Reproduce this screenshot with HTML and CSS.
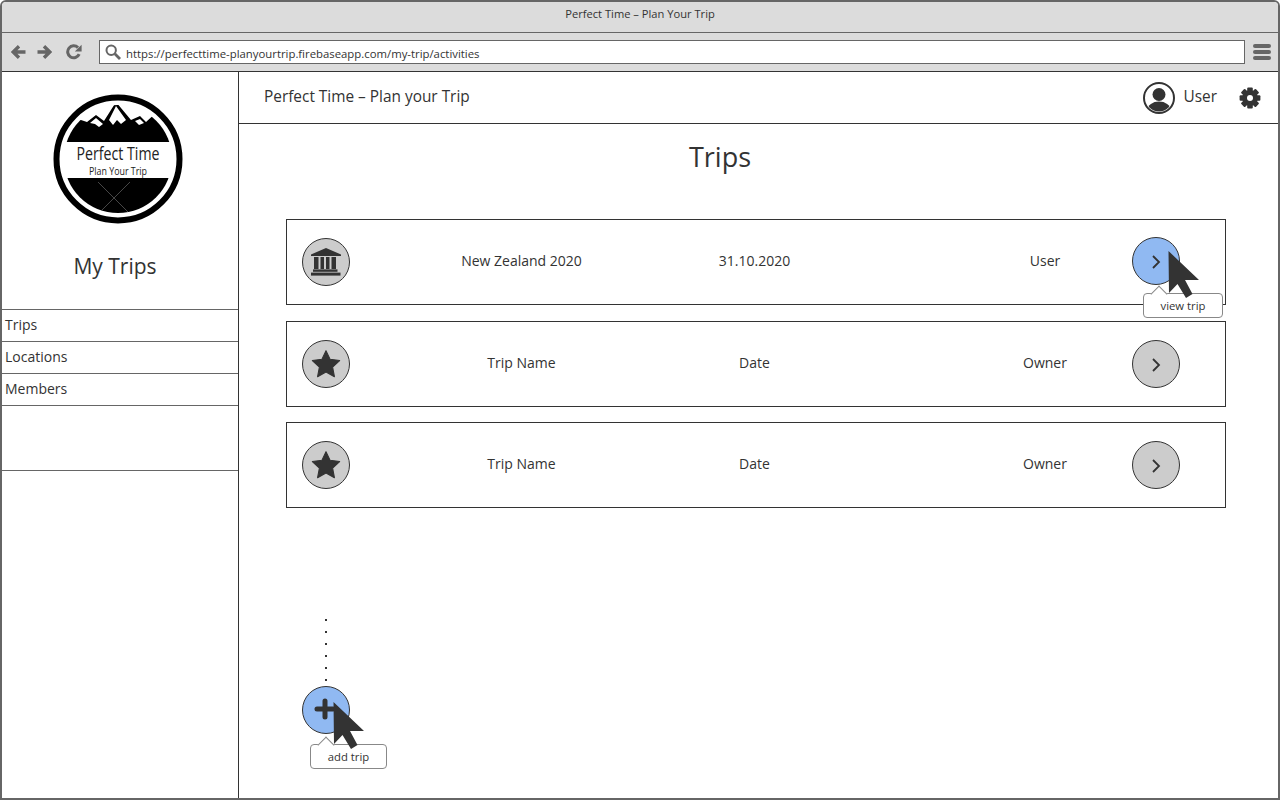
FILE: index.html
```html
<!DOCTYPE html>
<html lang="en">
<head>
  <meta charset="UTF-8">
  <meta name="viewport" content="width=device-width, initial-scale=1.0">
  <link rel="stylesheet" href="styles.css">
  <title>Perfect Time – Plan Your Trip</title>
</head>
<body>
  <div class="window">
    <div class="titleBar">Perfect Time – Plan Your Trip</div>

    <div class="navBar">
      <svg class="navIcon" width="16" height="16" viewBox="0 0 16 16">
        <path d="M14.5 8H2.5M8 2.2L2.2 8L8 13.8" fill="none" stroke="#666" stroke-width="3.4"/>
      </svg>
      <svg class="navIcon" width="16" height="16" viewBox="0 0 16 16">
        <path d="M1.5 8H13.5M8 2.2L13.8 8L8 13.8" fill="none" stroke="#666" stroke-width="3.4"/>
      </svg>
      <svg class="navIcon reload" width="16" height="16" viewBox="0 0 16 16">
        <path d="M13.2 10.2A6 6 0 1 1 12 3.6" fill="none" stroke="#666" stroke-width="3"/>
        <path d="M15.6 0.8V7.6H8.8Z" fill="#666"/>
      </svg>
      <div class="urlBox">
        <svg class="searchIcon" width="16" height="16" viewBox="0 0 16 16">
          <circle cx="6.2" cy="6.2" r="4.7" fill="none" stroke="#666" stroke-width="2"/>
          <path d="M9.8 9.8L15 15" stroke="#666" stroke-width="2.8"/>
        </svg>
        <span class="urlText">https://perfecttime-planyourtrip.firebaseapp.com/my-trip/activities</span>
      </div>
      <div class="burger"><i></i><i></i><i></i></div>
    </div>

    <div class="app">
      <aside class="sidebar">
        <svg class="logo" width="130" height="130" viewBox="0 0 130 130">
          <defs>
            <clipPath id="logoClip"><circle cx="65" cy="65" r="54"/></clipPath>
          </defs>
          <circle cx="65" cy="65" r="61.5" fill="#fff" stroke="#000" stroke-width="6"/>
          <g clip-path="url(#logoClip)">
            <path d="M0 48L9 48L19 23L34 28L43 21L51 27L63 8L78 26L87 22L93 28L105 17L130 48Z" fill="#000"/>
            <path d="M37 29L43 24L50 30L46 33L42 30ZM56 26L63 12L73 26L68 30L64 26L60 31ZM82 27L87 25L91 29L86 31Z" fill="#fff"/>
            <rect x="0" y="84" width="130" height="46" fill="#000"/>
            <path d="M45 88L77 120M77 88L45 120" stroke="#777" stroke-width="0.6"/>
          </g>
          <text class="logoTitle" x="65" y="66" text-anchor="middle" textLength="83" lengthAdjust="spacingAndGlyphs">Perfect Time</text>
          <text class="logoSub" x="65" y="81" text-anchor="middle" textLength="58" lengthAdjust="spacingAndGlyphs">Plan Your Trip</text>
        </svg>
        <h2 class="sideTitle">My Trips</h2>
        <ul class="sideNav">
          <li>Trips</li>
          <li>Locations</li>
          <li>Members</li>
          <li class="sideEmpty"></li>
        </ul>
      </aside>

      <div class="content">
        <header class="topBar">
          <span class="appName">Perfect Time – Plan your Trip</span>
          <svg class="avatar" width="32" height="32" viewBox="0 0 32 32">
            <defs>
              <clipPath id="avatarClip"><circle cx="16" cy="16" r="13.5"/></clipPath>
            </defs>
            <circle cx="16" cy="16" r="15" fill="#fff" stroke="#333" stroke-width="2"/>
            <circle cx="16" cy="12.5" r="6.5" fill="#333"/>
            <ellipse cx="16" cy="28" rx="11.5" ry="8.5" fill="#333" clip-path="url(#avatarClip)"/>
          </svg>
          <span class="userName">User</span>
          <svg class="gear" width="22" height="22" viewBox="0 0 22 22">
            <g fill="#333">
              <circle cx="11" cy="11" r="7.8"/>
              <rect x="8.2" y="0.6" width="5.6" height="20.8" rx="1"/>
              <rect x="8.2" y="0.6" width="5.6" height="20.8" rx="1" transform="rotate(45 11 11)"/>
              <rect x="8.2" y="0.6" width="5.6" height="20.8" rx="1" transform="rotate(90 11 11)"/>
              <rect x="8.2" y="0.6" width="5.6" height="20.8" rx="1" transform="rotate(135 11 11)"/>
            </g>
            <circle cx="11" cy="11" r="3" fill="#fff"/>
          </svg>
        </header>

        <main class="mainArea">
          <h1 class="pageTitle">Trips</h1>

          <div class="tripRow">
            <div class="circle">
              <svg width="32" height="30" viewBox="0 0 32 30">
                <path d="M16 1L31 7.6V9H1V7.6Z" fill="#333"/>
                <path d="M4 10H8.5V22H4ZM10.5 10H14V22H10.5ZM16 10H19.5V22H16ZM21.5 10H26V22H21.5Z" fill="#333"/>
                <rect x="3" y="22.4" width="24.5" height="2.4" fill="#333"/>
                <rect x="1" y="25.6" width="29.5" height="3" fill="#333"/>
              </svg>
            </div>
            <span class="tripName">New Zealand 2020</span>
            <span class="tripDate">31.10.2020</span>
            <span class="tripOwner">User</span>
            <div class="circle active">
              <svg class="chevron" width="10" height="14" viewBox="0 0 10 14"><path d="M2 1L8 7L2 13" fill="none" stroke="#333" stroke-width="1.8"/></svg>
            </div>
            <div class="tooltip viewTip">view trip</div>
            <svg class="pointer viewPointer" width="32" height="48" viewBox="0 0 32 48">
              <path d="M0.5 0L1 42L9.5 33L18 47L24.5 43L17 29L31 29Z" fill="#333"/>
            </svg>
          </div>

          <div class="tripRow tightRow">
            <div class="circle">
              <svg width="32" height="32" viewBox="0 0 30 30">
                <path d="M15 2.5L18.8 10.6L27.8 11.8L21.2 18L22.9 26.9L15 22.5L7.1 26.9L8.8 18L2.2 11.8L11.2 10.6Z" fill="#333" stroke="#333" stroke-linejoin="round"/>
              </svg>
            </div>
            <span class="tripName">Trip Name</span>
            <span class="tripDate">Date</span>
            <span class="tripOwner">Owner</span>
            <div class="circle">
              <svg class="chevron" width="10" height="14" viewBox="0 0 10 14"><path d="M2 1L8 7L2 13" fill="none" stroke="#333" stroke-width="1.8"/></svg>
            </div>
          </div>

          <div class="tripRow">
            <div class="circle">
              <svg width="32" height="32" viewBox="0 0 30 30">
                <path d="M15 2.5L18.8 10.6L27.8 11.8L21.2 18L22.9 26.9L15 22.5L7.1 26.9L8.8 18L2.2 11.8L11.2 10.6Z" fill="#333" stroke="#333" stroke-linejoin="round"/>
              </svg>
            </div>
            <span class="tripName">Trip Name</span>
            <span class="tripDate">Date</span>
            <span class="tripOwner">Owner</span>
            <div class="circle">
              <svg class="chevron" width="10" height="14" viewBox="0 0 10 14"><path d="M2 1L8 7L2 13" fill="none" stroke="#333" stroke-width="1.8"/></svg>
            </div>
          </div>

          <div class="addArea">
            <div class="dots"></div>
            <div class="circle active">
              <svg class="plus" width="22" height="22" viewBox="0 0 22 22"><path d="M11 3V19M3 11H19" stroke="#333" stroke-width="5" stroke-linecap="round"/></svg>
            </div>
            <div class="tooltip addTip">add trip</div>
            <svg class="pointer addPointer" width="32" height="48" viewBox="0 0 32 48">
              <path d="M0.5 0L1 42L9.5 33L18 47L24.5 43L17 29L31 29Z" fill="#333"/>
            </svg>
          </div>
        </main>
      </div>
    </div>
  </div>
</body>
</html>
```

FILE: styles.css
```css
* {
  box-sizing: border-box;
}

html, body {
  margin: 0;
  background-color: #fff;
}

body {
  font-family: "Open Sans", Arial, sans-serif;
  color: #333;
}

.window {
  display: flex;
  flex-direction: column;
  width: 1280px;
  height: 800px;
  border: 2px solid #666;
  border-radius: 6px 6px 0 0;
  overflow: hidden;
}

.titleBar {
  height: 31px;
  line-height: 24px;
  flex-shrink: 0;
  text-align: center;
  font-size: 11.15px;
  background-color: #dcdcdc;
  border-bottom: 1px solid #666;
}

.navBar {
  display: flex;
  align-items: center;
  height: 39px;
  flex-shrink: 0;
  padding-left: 9px;
  background-color: #dcdcdc;
  border-bottom: 1px solid #333;
}

.navIcon {
  margin-right: 9px;
}

.reload {
  margin-left: 5px;
  margin-right: 17px;
}

.urlBox {
  display: flex;
  align-items: center;
  width: 1146px;
  height: 24px;
  padding-left: 5px;
  font-size: 11.35px;
  background-color: #fff;
  border: 1px solid #666;
}

.urlText {
  padding-top: 2px;
}

.searchIcon {
  margin-right: 5px;
}

.burger {
  display: flex;
  flex-direction: column;
  gap: 2px;
  margin-left: 8px;
}

.burger i {
  display: block;
  width: 18px;
  height: 4px;
  border-radius: 2px;
  background-color: #666;
}

.app {
  display: flex;
  flex: 1;
  min-height: 0;
}

.sidebar {
  width: 237px;
  flex-shrink: 0;
  padding-top: 22px;
  border-right: 1px solid #333;
}

.logo {
  display: block;
  margin-left: 51px;
}

.logoTitle {
  font-family: "Open Sans", Arial, sans-serif;
  font-size: 18px;
  fill: #222;
}

.logoSub {
  font-family: "Open Sans", Arial, sans-serif;
  font-size: 10px;
  fill: #222;
}

.sideTitle {
  margin: 0;
  padding-top: 27px;
  width: 226px;
  height: 85px;
  text-align: center;
  font-size: 21px;
  line-height: 30px;
  font-weight: 400;
}

.sideNav {
  margin: 0;
  padding: 0;
  list-style: none;
  border-top: 1px solid #666;
}

.sideNav li {
  height: 32px;
  padding-left: 3px;
  font-size: 14px;
  line-height: 30px;
  border-bottom: 1px solid #666;
}

.sideNav .sideEmpty {
  height: 65px;
}

.content {
  flex: 1;
  min-width: 0;
}

.topBar {
  display: flex;
  align-items: center;
  height: 52px;
  padding-left: 25px;
  border-bottom: 1px solid #333;
}

.appName {
  flex: 1;
  padding-bottom: 2px;
  font-size: 15.4px;
}

.avatar {
  margin-right: 9px;
}

.userName {
  margin-right: 22px;
  padding-bottom: 2px;
  font-size: 15.4px;
}

.gear {
  margin-right: 17px;
}

.mainArea {
  padding-left: 47px;
}

.pageTitle {
  width: 868px;
  margin: 11px 0 41px;
  text-align: center;
  font-size: 27px;
  line-height: 43px;
  font-weight: 400;
}

.tripRow {
  position: relative;
  display: grid;
  grid-template-columns: 48px 343px 123px 1fr 174px 48px;
  align-items: center;
  width: 940px;
  height: 86px;
  margin-bottom: 16px;
  padding: 0 45px 0 15px;
  font-size: 14px;
  text-align: center;
  border: 1px solid #333;
}

.tightRow {
  margin-bottom: 15px;
}

.tripRow:last-of-type {
  margin-bottom: 0;
}

.tripRow span {
  padding-bottom: 4px;
}

.tripOwner {
  grid-column: 5;
}

.circle {
  display: flex;
  align-items: center;
  justify-content: center;
  width: 48px;
  height: 48px;
  border-radius: 50%;
  background-color: #ccc;
  border: 1px solid #333;
}

.circle.active {
  background-color: #90b9f2;
}

.tripRow .circle.active {
  margin-top: -2px;
}

.chevron {
  margin-top: 2px;
}

.plus {
  margin: -2px 2px 0 0;
}

.tooltip {
  position: absolute;
  height: 25px;
  text-align: center;
  font-size: 11.3px;
  line-height: 24px;
  background-color: #fff;
  border: 1px solid #888;
  border-radius: 4px;
}

.tooltip::before {
  content: "";
  position: absolute;
  top: -6px;
  width: 11px;
  height: 11px;
  background-color: #fff;
  border-top: 1px solid #888;
  border-left: 1px solid #888;
  transform: rotate(45deg);
}

.viewTip {
  left: 856px;
  top: 73px;
  width: 80px;
}

.viewTip::before {
  left: 9px;
}

.pointer {
  position: absolute;
}

.viewPointer {
  left: 881px;
  top: 31px;
}

.addArea {
  position: relative;
  width: 48px;
  margin: 111px 0 0 16px;
}

.dots {
  width: 2px;
  height: 66px;
  margin: 0 0 1px 23px;
  background-image: repeating-linear-gradient(to bottom, #333 0, #333 2px, transparent 2px, transparent 12px);
}

.addTip {
  left: 8px;
  top: 125px;
  width: 77px;
  height: 25px;
}

.addTip::before {
  left: 9px;
}

.addPointer {
  left: 31px;
  top: 83px;
}
```
